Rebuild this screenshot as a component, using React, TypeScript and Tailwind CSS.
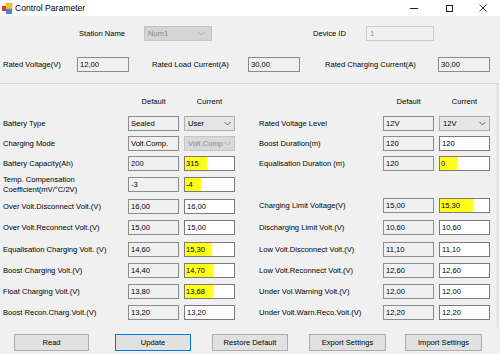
import { FunctionComponent } from "react";

type Cell = { text: string; kind?: "text" | "combo" | "off"; mark?: string };
type Row = { label: string[]; mt: string; def: string; cur: Cell };

const leftRows: Row[] = [
  { label: ["Battery Type"], mt: "mt-[8px]", def: "Sealed", cur: { text: "User", kind: "combo" } },
  { label: ["Charging Mode"], mt: "mt-[5px]", def: "Volt.Comp.", cur: { text: "Volt.Comp", kind: "off" } },
  { label: ["Battery Capacity(Ah)"], mt: "mt-[5px]", def: "200", cur: { text: "315", mark: "w-[22px]" } },
  {
    label: ["Temp. Compensation", "Coefficient(mV/°C/2V)"],
    mt: "mt-[6px]",
    def: "-3",
    cur: { text: "-4", mark: "w-[16px]" },
  },
  { label: ["Over Volt.Disconnect Volt.(V)"], mt: "mt-[7px]", def: "16,00", cur: { text: "16,00" } },
  { label: ["Over Volt.Reconnect Volt.(V)"], mt: "mt-[6px]", def: "15,00", cur: { text: "15,00" } },
  { label: ["Equalisation Charging Volt. (V)"], mt: "mt-[7px]", def: "14,60", cur: { text: "15,30", mark: "w-[27px]" } },
  { label: ["Boost Charging Volt.(V)"], mt: "mt-[6px]", def: "14,40", cur: { text: "14,70", mark: "w-[29px]" } },
  { label: ["Float Charging Volt.(V)"], mt: "mt-[6px]", def: "13,80", cur: { text: "13,68", mark: "w-[28px]" } },
  { label: ["Boost Recon.Charg.Volt.(V)"], mt: "mt-[6px]", def: "13,20", cur: { text: "13,20" } },
  // next row, scrolled below the panel edge: only the box tops show
  { label: [""], mt: "mt-[7px]", def: "", cur: { text: "" } },
];

const rightRows: Row[] = [
  { label: ["Rated Voltage Level"], mt: "mt-[8px]", def: "12V", cur: { text: "12V", kind: "combo" } },
  { label: ["Boost Duration(m)"], mt: "mt-[5px]", def: "120", cur: { text: "120" } },
  { label: ["Equalisation Duration (m)"], mt: "mt-[5px]", def: "120", cur: { text: "0", mark: "w-[17px]" } },
  { label: ["Charging Limit Voltage(V)"], mt: "mt-[27px]", def: "15,00", cur: { text: "15,30", mark: "w-[33px]" } },
  { label: ["Discharging Limit Volt.(V)"], mt: "mt-[7px]", def: "10,60", cur: { text: "10,60" } },
  { label: ["Low Volt.Disconnect Volt.(V)"], mt: "mt-[7px]", def: "11,10", cur: { text: "11,10" } },
  { label: ["Low Volt.Reconnect Volt.(V)"], mt: "mt-[6px]", def: "12,60", cur: { text: "12,60" } },
  { label: ["Under Vol.Warning Volt.(V)"], mt: "mt-[6px]", def: "12,00", cur: { text: "12,00" } },
  { label: ["Under Volt.Warn.Reco.Volt.(V)"], mt: "mt-[6px]", def: "12,20", cur: { text: "12,20" } },
  { label: [""], mt: "mt-[7px]", def: "", cur: { text: "" } },
];

const buttons = [
  { label: "Read", ml: "ml-[14px]", w: "w-[75px]" },
  { label: "Update", ml: "ml-[26px]", w: "w-[76px]", focus: true },
  { label: "Restore Default", ml: "ml-[21px]", w: "w-[76px]" },
  { label: "Export Settings", ml: "ml-[21px]", w: "w-[77px]" },
  { label: "Import Settings", ml: "ml-[19px]", w: "w-[77px]" },
];

const Chevron = ({ color = "#555" }: { color?: string }) => (
  <svg width="7" height="5" viewBox="0 0 7 5" className="shrink-0">
    <path d="M0.5 1 L3.5 4 L6.5 1" fill="none" stroke={color} strokeWidth="0.9" />
  </svg>
);

const ReadBox = ({ text, w = "w-[51px]" }: { text: string; w?: string }) => (
  <div className={`${w} h-[15px] shrink-0 border border-[#8c8c8c] bg-[#f0f0f0] pl-[2px] flex items-center text-black`}>
    {text}
  </div>
);

const CurBox: FunctionComponent<{ cell: Cell }> = ({ cell }) => {
  if (cell.kind === "combo")
    return (
      <div className="w-[51px] h-[15px] shrink-0 border border-[#adadad] bg-[#e5e5e5] pl-[3px] pr-[3px] flex items-center justify-between text-black">
        <span>{cell.text}</span>
        <Chevron />
      </div>
    );
  if (cell.kind === "off")
    return (
      <div className="w-[51px] h-[15px] shrink-0 border border-[#c4c4c4] bg-[#d9d9d9] pl-[3px] pr-[3px] flex items-center justify-between text-[#8a8a8a]">
        <span>{cell.text}</span>
        <Chevron color="#a8a8a8" />
      </div>
    );
  return (
    <div className="w-[51px] h-[15px] shrink-0 border border-[#7a7a7a] bg-white flex items-center text-black">
      {cell.mark ? (
        <span className={`${cell.mark} h-[13px] bg-[#ffff1a] pl-[1px] flex items-center`}>{cell.text}</span>
      ) : (
        <span className="pl-[2px]">{cell.text}</span>
      )}
    </div>
  );
};

const ParamColumn: FunctionComponent<{ rows: Row[]; pad: string; labelW: string }> = ({ rows, pad, labelW }) => (
  <div className={`flex flex-col ${pad}`}>
    <div className="flex h-[12px] items-center">
      <div className={`${labelW} shrink-0`} />
      <div className="w-[51px] text-center">Default</div>
      <div className="w-[51px] ml-[5px] text-center">Current</div>
    </div>
    {rows.map((r, i) => (
      <div key={i} className={`flex items-center h-[15px] ${r.mt}`}>
        <div className={`${labelW} shrink-0 leading-[10px]`}>
          {r.label.map((l) => (
            <div key={l}>{l}</div>
          ))}
        </div>
        <ReadBox text={r.def} />
        <div className="ml-[5px]">
          <CurBox cell={r.cur} />
        </div>
      </div>
    ))}
  </div>
);

export default function App() {
  return (
    <div className="w-[500px] h-[354px] bg-[#f0f0f0] overflow-hidden text-[7.6px] text-black font-['Liberation_Sans',Arial,sans-serif]">
      {/* title bar */}
      <div className="h-[16px] bg-white flex items-center">
        <svg width="11" height="11" viewBox="0 0 11 11" className="ml-[2px]">
          <rect x="0" y="3" width="5" height="5" fill="#d9352b" />
          <rect x="4" y="0" width="6" height="6" fill="#f2c230" stroke="#c99a10" strokeWidth="0.5" />
          <rect x="4" y="6" width="6" height="5" fill="#4a86d8" />
        </svg>
        <span className="ml-[2px] text-[8.6px] text-black">Control Parameter</span>
        <div className="ml-auto flex items-center h-full">
          <div className="w-[36px] h-full flex items-center justify-center">
            <div className="w-[8px] h-px bg-[#222]" />
          </div>
          <div className="w-[34px] h-full flex items-center justify-center">
            <div className="w-[7px] h-[7px] border border-[#222]" />
          </div>
          <div className="w-[34px] h-full flex items-center justify-center">
            <svg width="8" height="8" viewBox="0 0 8 8">
              <path d="M0.5 0.5 L7.5 7.5 M7.5 0.5 L0.5 7.5" stroke="#222" strokeWidth="0.9" />
            </svg>
          </div>
        </div>
      </div>

      {/* station row */}
      <div className="flex items-center mt-[10px] h-[15px] pl-[79px]">
        <div className="w-[65px]">Station Name</div>
        <div className="w-[68px] h-[15px] border border-[#c4c4c4] bg-[#d4d4d4] pl-[3px] pr-[6px] flex items-center justify-between text-[#8a8a8a]">
          <span>Num1</span>
          <Chevron color="#a8a8a8" />
        </div>
        <div className="ml-[101px] w-[53px]">Device ID</div>
        <div className="w-[68px] h-[15px] border border-[#cfcfcf] bg-[#f0f0f0] pl-[3px] flex items-center text-[#8a8a8a]">
          1
        </div>
      </div>

      {/* rated row */}
      <div className="flex items-center mt-[16px] h-[15px] pl-[3px]">
        <div className="w-[74px]">Rated Voltage(V)</div>
        <ReadBox text="12,00" w="w-[52px]" />
        <div className="ml-[23px] w-[96px]">Rated Load Current(A)</div>
        <ReadBox text="30,00" w="w-[52px]" />
        <div className="ml-[25px] w-[113px]">Rated Charging Current(A)</div>
        <ReadBox text="30,00" w="w-[52px]" />
      </div>

      {/* parameter panel */}
      <div className="mt-[11px] w-[498px] h-[244px] border-t border-r border-[#d4d4d4] overflow-hidden flex pt-[12px]">
        <div className="w-[250px] shrink-0">
          <ParamColumn rows={leftRows} pad="pl-[3px]" labelW="w-[125px]" />
        </div>
        <div className="w-[247px] shrink-0">
          <ParamColumn rows={rightRows} pad="pl-[9px]" labelW="w-[124px]" />
        </div>
      </div>

      {/* buttons */}
      <div className="flex mt-[7px]">
        {buttons.map((b) => (
          <button
            key={b.label}
            className={`${b.ml} ${b.w} h-[17px] bg-[#e1e1e1] border ${
              b.focus ? "border-[#0078d7]" : "border-[#adadad]"
            } text-[7.6px] text-black flex items-center justify-center`}
          >
            {b.label}
          </button>
        ))}
      </div>
    </div>
  );
}
